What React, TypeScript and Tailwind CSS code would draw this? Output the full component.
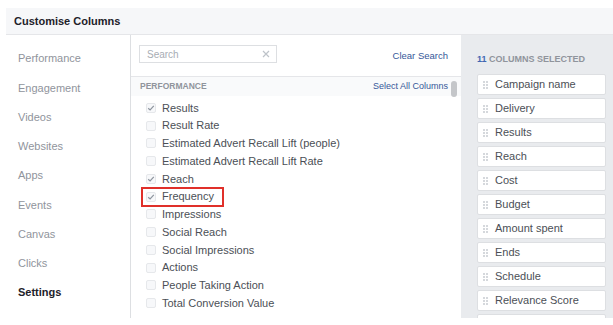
const navItems = [
  "Performance",
  "Engagement",
  "Videos",
  "Websites",
  "Apps",
  "Events",
  "Canvas",
  "Clicks",
  "Settings",
];

const metrics: { label: string; checked: boolean; highlight?: boolean }[] = [
  { label: "Results", checked: true },
  { label: "Result Rate", checked: false },
  { label: "Estimated Advert Recall Lift (people)", checked: false },
  { label: "Estimated Advert Recall Lift Rate", checked: false },
  { label: "Reach", checked: true },
  { label: "Frequency", checked: true, highlight: true },
  { label: "Impressions", checked: false },
  { label: "Social Reach", checked: false },
  { label: "Social Impressions", checked: false },
  { label: "Actions", checked: false },
  { label: "People Taking Action", checked: false },
  { label: "Total Conversion Value", checked: false },
];

const selected = [
  "Campaign name",
  "Delivery",
  "Results",
  "Reach",
  "Cost",
  "Budget",
  "Amount spent",
  "Ends",
  "Schedule",
  "Relevance Score",
  "",
];

const Checkbox = ({ checked }: { checked: boolean }) => (
  <span className="w-[10px] h-[10px] rounded-[2px] border border-[#e6e8eb] bg-[#f7f8fa] flex items-center justify-center shrink-0">
    {checked && (
      <svg width="8" height="8" viewBox="0 0 8 8">
        <path d="M1.2 4.2 L3.1 6 L6.8 1.8" fill="none" stroke="#8d949e" strokeWidth="1.2" />
      </svg>
    )}
  </span>
);

const Handle = () => (
  <span className="grid grid-cols-2 gap-x-[1px] gap-y-[1px] w-[5px] shrink-0">
    {[0, 1, 2, 3, 4, 5].map((i) => (
      <span key={i} className="w-[2px] h-[2px] bg-[#d5d8dc]" />
    ))}
  </span>
);

export default function App() {
  return (
    <div className="w-[613px] h-[325px] bg-white pl-[6px] pt-[8px] overflow-hidden font-['Liberation_Sans',Arial,sans-serif]">
      <div className="h-[27px] bg-[#f6f7f9] border-b border-[#e5e6e9] flex items-center pl-[8px] text-[11px] font-bold text-[#1d2129]">
        Customise Columns
      </div>
      <div className="flex h-[283px]">
        <div className="w-[124px] pl-[12px] pt-[9px]">
          {navItems.map((n) => (
            <div
              key={n}
              className={`h-[29.25px] flex items-center text-[11px] ${
                n === "Settings" ? "font-bold text-[#1d2129]" : "text-[#90949c]"
              }`}
            >
              {n}
            </div>
          ))}
        </div>

        <div className="w-[331px] border-l border-[#dddfe2] relative">
          <div className="h-[42px] border-b border-[#e5e6e9] flex items-start pt-[10px] pl-[8px] pr-[13px]">
            <div className="w-[138px] h-[18px] border border-[#dddfe2] flex items-center justify-between pl-[7px] pr-[6px]">
              <span className="text-[10px] text-[#a8adb4]">Search</span>
              <svg width="8" height="8" viewBox="0 0 8 8">
                <path d="M1 1 L7 7 M7 1 L1 7" stroke="#bec3c9" strokeWidth="1.2" />
              </svg>
            </div>
            <span className="ml-auto mt-[4px] text-[9.5px] text-[#365899]">Clear Search</span>
          </div>
          <div className="h-[19px] bg-[#f9fafb] flex items-center pl-[9px] pr-[13px]">
            <span className="text-[8.5px] font-bold text-[#90949c]">PERFORMANCE</span>
            <span className="ml-auto text-[9px] text-[#365899]">Select All Columns</span>
          </div>
          <div className="pt-[3px] pl-[15px]">
            {metrics.map((m) => (
              <div key={m.label} className="relative h-[17.75px] flex items-center gap-[6px] text-[11px] text-[#4b4f56]">
                <Checkbox checked={m.checked} />
                <span>{m.label}</span>
                {m.highlight && (
                  <span className="absolute left-[-5px] top-[-1px] w-[83px] h-[20px] border-2 border-[#e0302a]" />
                )}
              </div>
            ))}
          </div>
          <span className="absolute right-[4px] top-[46px] w-[6px] h-[16px] rounded-[3px] bg-[#c4c6c9]" />
        </div>

        <div className="flex-1 bg-[#e9ebee] pl-[16px] pt-[18px] overflow-hidden">
          <div className="leading-[12px] text-[9px] font-bold text-[#90949c]">
            <span className="text-[#4267b2]">11</span> COLUMNS SELECTED
          </div>
          <div className="mt-[9px] flex flex-col gap-[3px]">
            {selected.map((s, i) => (
              <div
                key={i}
                className="h-[21px] w-[129px] shrink-0 bg-white border border-[#dddfe2] rounded-[2px] flex items-center pl-[5px] gap-[7px] text-[11px] text-[#4b4f56]"
              >
                <Handle />
                <span>{s}</span>
              </div>
            ))}
          </div>
        </div>
      </div>
    </div>
  );
}
